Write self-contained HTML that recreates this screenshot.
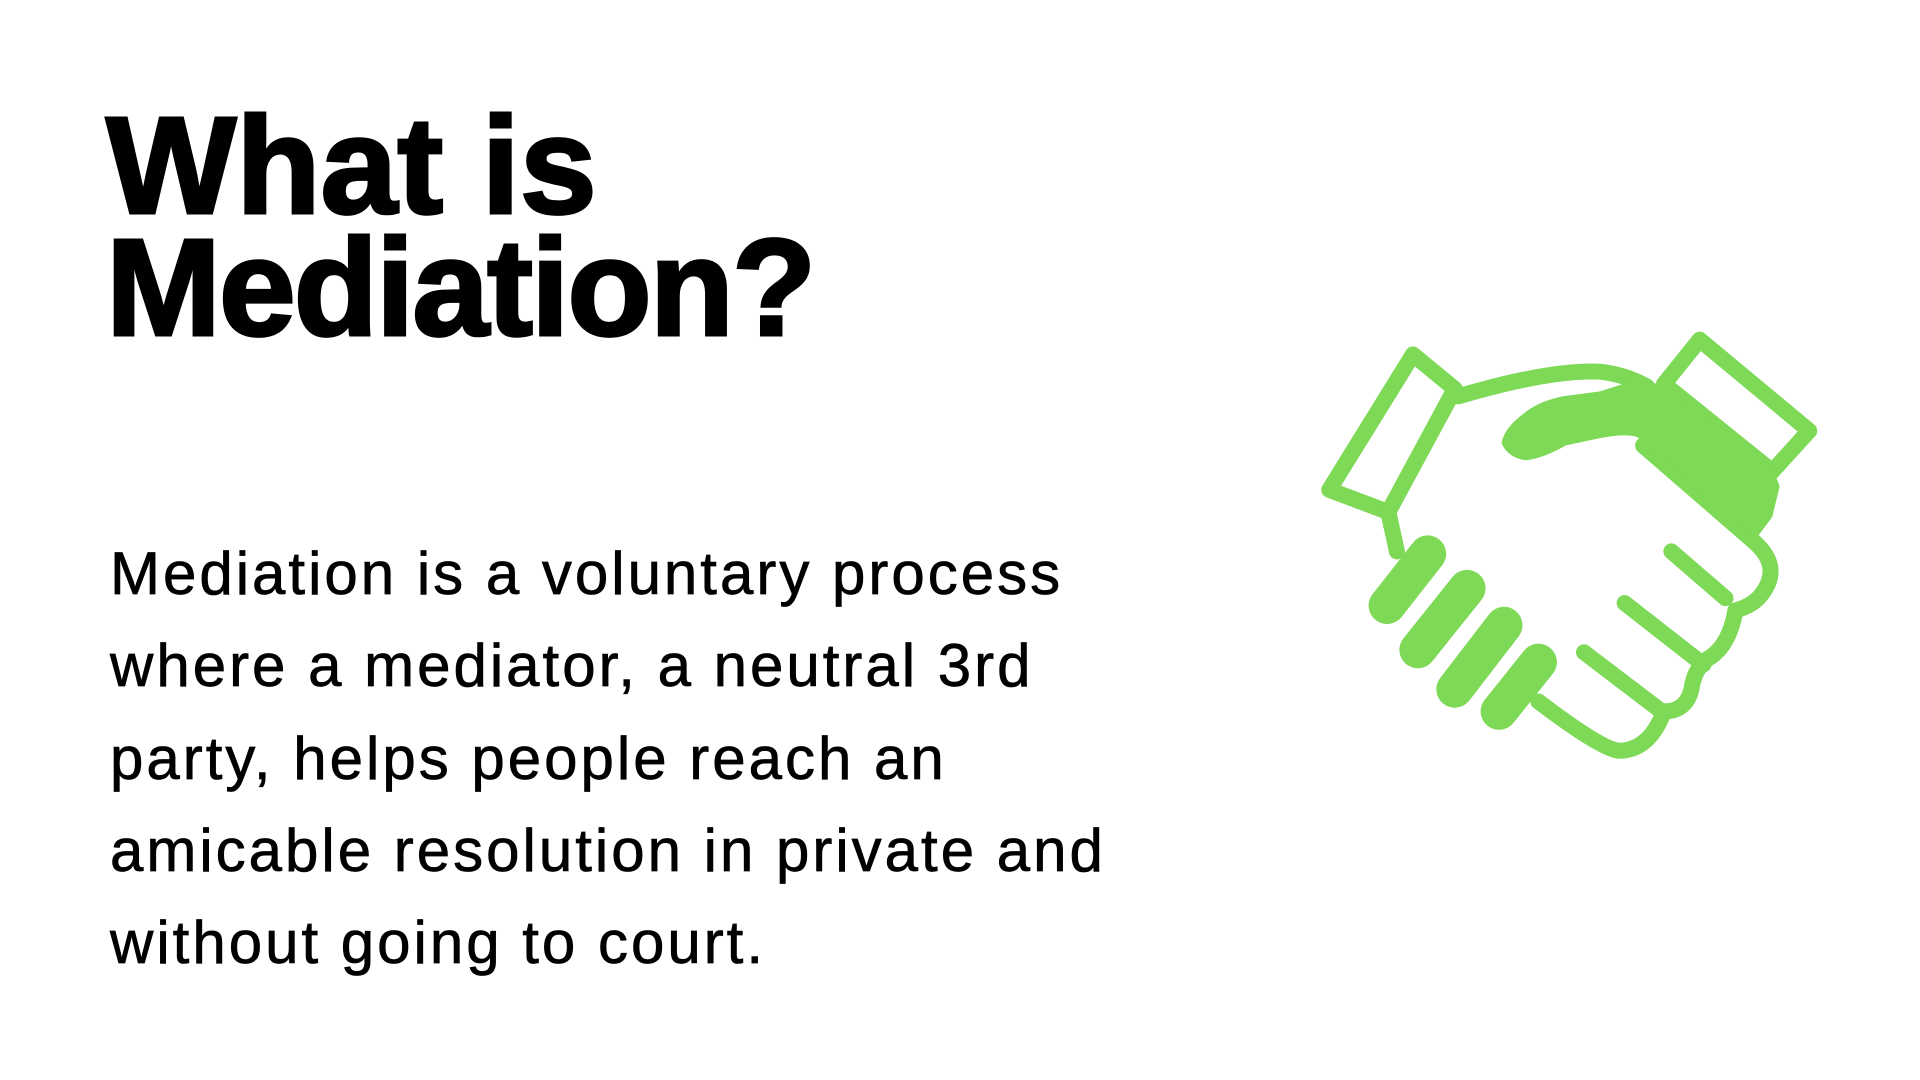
<!DOCTYPE html>
<html><head><meta charset="utf-8"><style>
html,body{margin:0;padding:0;background:#fff;width:1920px;height:1080px;overflow:hidden;position:relative}
.t{position:absolute;left:106px;font-family:"Liberation Sans",sans-serif;font-weight:bold;font-size:138px;letter-spacing:-2px;color:#000;line-height:1;-webkit-text-stroke:3px #000}
.b{position:absolute;left:110px;top:528px;font-family:"Liberation Sans",sans-serif;font-size:60px;letter-spacing:3px;line-height:92.3px;color:#000;-webkit-text-stroke:0.7px #000;white-space:nowrap}
svg{position:absolute;left:0;top:0}
</style></head><body>
<div class="t" style="top:97px;letter-spacing:0px">What is</div>
<div class="t" style="top:219px">Mediation?</div>
<div class="b">Mediation is a voluntary process<br>where a mediator, a neutral 3rd<br>party, helps people reach an<br>amicable resolution in private and<br>without going to court.</div>
<svg width="1920" height="1080" viewBox="0 0 1560 877.5">
<g fill="none" stroke="#7ed957" stroke-width="13" stroke-linejoin="round" stroke-linecap="round">
<polygon points="1148,288 1182,316 1128,416 1080,398"/>
<polygon points="1352,312 1381,276 1470,350 1440,383"/>
<path d="M1185,322 Q1260,300 1300,302 Q1320,304 1338,314"/>
<path d="M1128,416 L1135,448"/>
<path d="M1335,362 L1425,440 Q1448,460 1432,482 Q1425,492 1410,496 Q1405,525 1388,535 Q1378,542 1375,556 Q1372,578 1352,578 Q1340,610 1315,610 Q1300,608 1250,570"/>
<path d="M1358,448 L1402,486"/>
<path d="M1320,490 L1384,540"/>
<path d="M1287,530 L1350,578"/>
</g>
<path fill="#7ed957" d="M1325,310 L1352,312 L1440,380 L1446,395 L1440,420 L1428,436 L1330,355 Q1320,352 1300,356 L1272,362 Q1255,372 1240,374 Q1225,372 1220,360 Q1222,348 1238,336 Q1250,326 1270,322 L1300,318 Z"/>
<g stroke="#7ed957" stroke-width="30" stroke-linecap="round">
<line x1="1160" y1="450" x2="1127" y2="492"/>
<line x1="1192" y1="478" x2="1152" y2="528"/>
<line x1="1222" y1="508" x2="1182" y2="560"/>
<line x1="1250" y1="538" x2="1218" y2="578"/>
</g>
</svg>
</body></html>
